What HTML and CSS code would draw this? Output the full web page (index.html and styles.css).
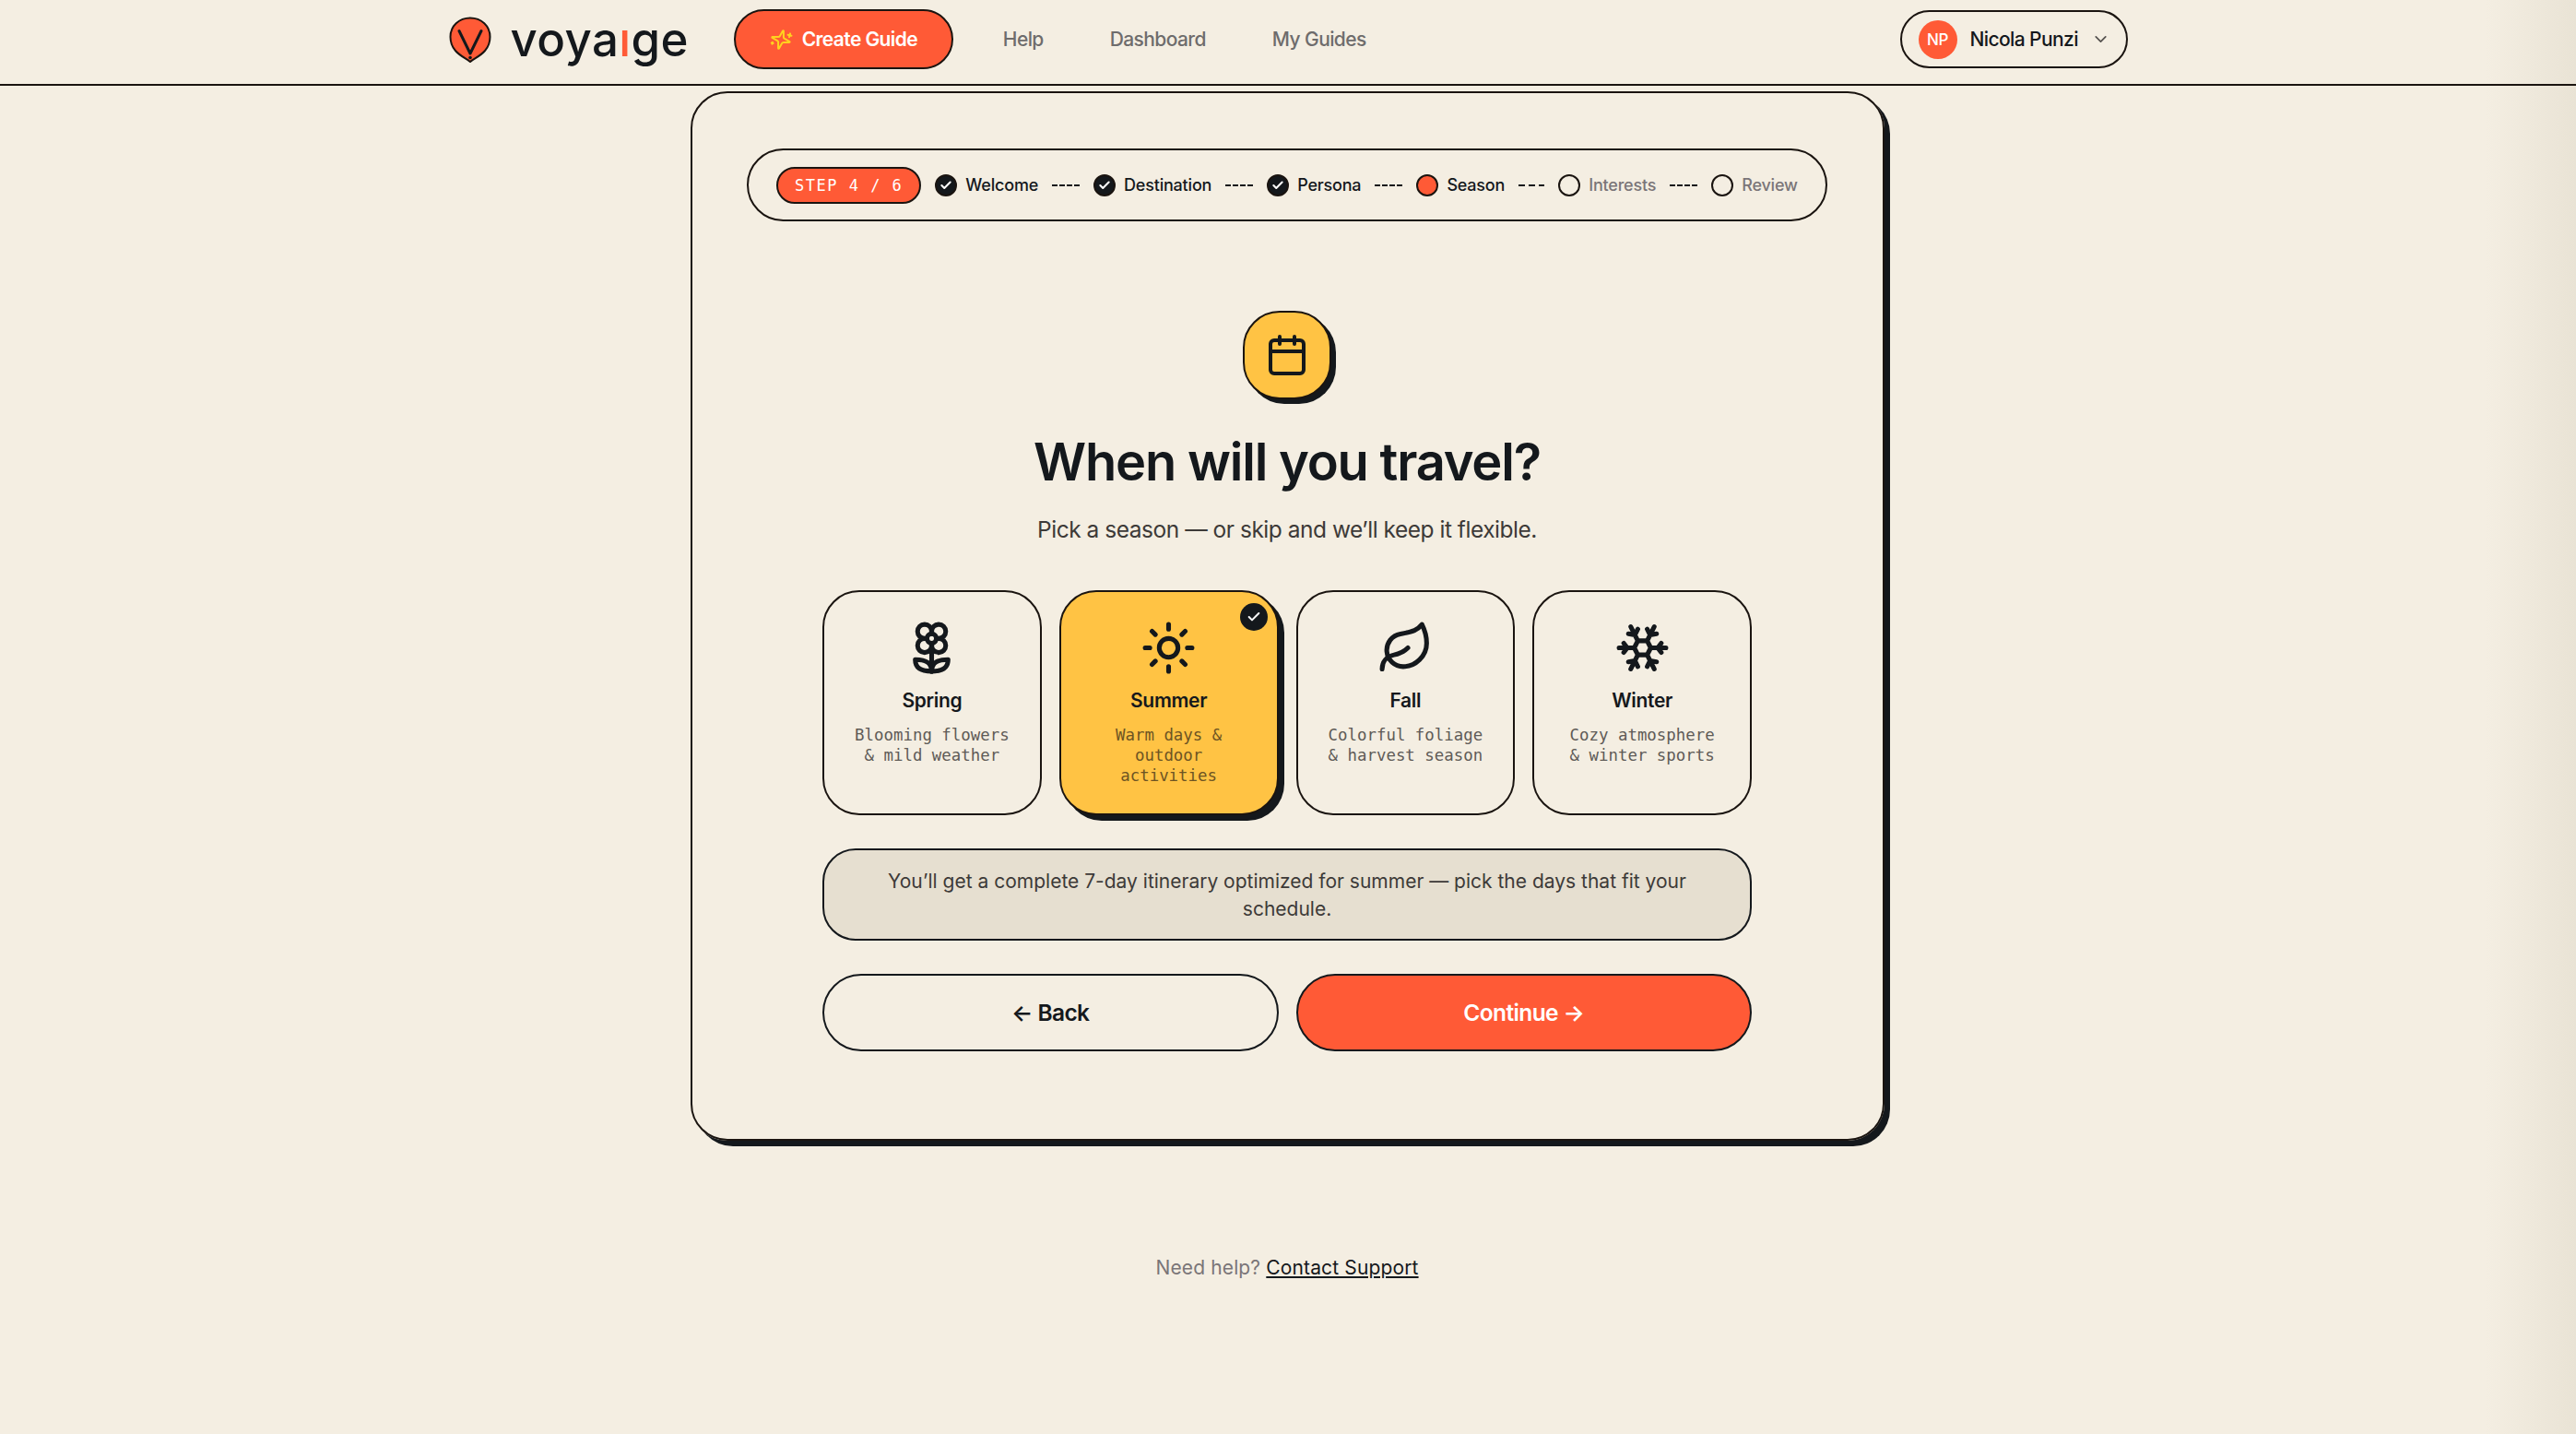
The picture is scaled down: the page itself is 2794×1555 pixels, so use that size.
FILE: index.html
```html
<!DOCTYPE html>
<html lang="en">
<head>
  <meta charset="UTF-8">
  <title>Voyaige - When will you travel?</title>
  <link rel="stylesheet" href="styles.css">
</head>
<body>
  <header class="topbar">
    <div class="topbar-inner">
      <a class="logo" href="#">
        <svg class="logo-pin" viewBox="0 0 46 50">
          <path d="M23 49C20 46 12 43 7 37C3.500 33 1.500 28 1.500 22C1.500 10 11 1.500 23 1.500S44.500 10 44.500 22C44.500 28 42.500 33 39 37C34 43 26 46 23 49Z" fill="#ff5a36" stroke="#1a1410" stroke-width="2"/>
          <path d="M11 15.500L23 40L35 15.500" fill="none" stroke="#14181c" stroke-width="3" stroke-linecap="round" stroke-linejoin="round"/>
          <circle cx="23" cy="44.500" r="1.800" fill="#14181c"/>
        </svg>
        <span class="logo-text">voya<span class="logo-i">ı</span>ge</span>
      </a>
      <a class="create-btn" href="#">
        <svg class="sparkle" viewBox="0 0 24 24">
          <path d="M9.937 15.500A2 2 0 0 0 8.500 14.063l-6.135-1.582a.5.5 0 0 1 0-.962L8.500 9.936A2 2 0 0 0 9.937 8.500l1.582-6.135a.5.5 0 0 1 .963 0L14.063 8.500A2 2 0 0 0 15.500 9.937l6.135 1.581a.5.5 0 0 1 0 .964L15.500 14.063a2 2 0 0 0-1.437 1.437l-1.582 6.135a.5.5 0 0 1-.963 0z"/>
          <path d="M20 3v4M22 5h-4M4 17v2M5 18H3"/>
        </svg>
        Create Guide
      </a>
      <nav class="nav">
        <a href="#">Help</a>
        <a href="#">Dashboard</a>
        <a href="#">My Guides</a>
      </nav>
      <div class="user-pill">
        <span class="avatar">NP</span>
        <span class="user-name">Nicola Punzi</span>
        <svg class="chevron" viewBox="0 0 24 24"><path d="m6 9 6 6 6-6"/></svg>
      </div>
    </div>
  </header>

  <main class="page">
    <section class="card">
      <div class="stepper">
        <span class="step-badge">STEP 4 / 6</span>
        <div class="step"><span class="dot done"><svg viewBox="0 0 24 24"><path d="M20 6 9 17l-5-5"/></svg></span>Welcome</div>
        <span class="dash"></span>
        <div class="step"><span class="dot done"><svg viewBox="0 0 24 24"><path d="M20 6 9 17l-5-5"/></svg></span>Destination</div>
        <span class="dash"></span>
        <div class="step"><span class="dot done"><svg viewBox="0 0 24 24"><path d="M20 6 9 17l-5-5"/></svg></span>Persona</div>
        <span class="dash"></span>
        <div class="step"><span class="dot current"></span>Season</div>
        <span class="dash wide"></span>
        <div class="step todo"><span class="dot"></span>Interests</div>
        <span class="dash"></span>
        <div class="step todo"><span class="dot"></span>Review</div>
      </div>

      <div class="hero-icon">
        <svg viewBox="0 0 24 24">
          <path d="M8 2v4M16 2v4"/>
          <rect x="3" y="4" width="18" height="18" rx="2"/>
          <path d="M3 10h18"/>
        </svg>
      </div>
      <h1>When will you travel?</h1>
      <p class="sub">Pick a season — or skip and we’ll keep it flexible.</p>

      <div class="form-col">
        <div class="seasons">
          <div class="season">
            <svg class="season-icon" viewBox="0 0 24 24">
              <path d="M12 5a3 3 0 1 1 3 3m-3-3a3 3 0 1 0-3 3m3-3v1M9 8a3 3 0 1 0 3 3M9 8h1m5 0a3 3 0 1 1-3 3m3-3h-1m-2 3v-1"/>
              <circle cx="12" cy="8" r="2"/>
              <path d="M12 10v12"/>
              <path d="M12 22c4.200 0 7-1.108 7-5-4.200 0-7 1.108-7 5Z"/>
              <path d="M12 22c-4.200 0-7-1.108-7-5 4.200 0 7 1.108 7 5Z"/>
            </svg>
            <div class="season-name">Spring</div>
            <div class="season-desc">Blooming flowers &amp; mild weather</div>
          </div>
          <div class="season selected">
            <span class="selected-check"><svg viewBox="0 0 24 24"><path d="M20 6 9 17l-5-5"/></svg></span>
            <svg class="season-icon" viewBox="0 0 24 24">
              <circle cx="12" cy="12" r="4"/>
              <path d="M12 2v2M12 20v2m-7.070-17.070 1.410 1.410m11.320 11.320 1.410 1.410M2 12h2m16 0h2M6.340 17.660l-1.410 1.410M19.070 4.930l-1.410 1.410"/>
            </svg>
            <div class="season-name">Summer</div>
            <div class="season-desc">Warm days &amp; outdoor activities</div>
          </div>
          <div class="season">
            <svg class="season-icon" viewBox="0 0 24 24">
              <path d="M11 20A7 7 0 0 1 9.800 6.100C15.500 5 17 4.480 19 2c1 2 2 4.180 2 8 0 5.500-4.780 10-10 10Z"/>
              <path d="M2 21c0-3 1.850-5.360 5.080-6C9.500 14.520 12 13 13 12"/>
            </svg>
            <div class="season-name">Fall</div>
            <div class="season-desc">Colorful foliage &amp; harvest season</div>
          </div>
          <div class="season">
            <svg class="season-icon" viewBox="0 0 24 24">
              <path d="m10 20-1.250-2.500L6 18M10 4 8.750 6.500 6 6m8 14 1.250-2.500L18 18M14 4l1.250 2.500L18 6m-1 15-3-6h-4m7-12-3 6 1.500 3M2 12h6.500L10 9m10 1-1.500 2 1.500 2m2-2h-6.500L14 15M4 10l1.500 2L4 14m3 7 3-6-1.500-3M7 3l3 6h4"/>
            </svg>
            <div class="season-name">Winter</div>
            <div class="season-desc">Cozy atmosphere &amp; winter sports</div>
          </div>
        </div>

        <div class="note">You’ll get a complete 7-day itinerary optimized for summer — pick the days that fit your schedule.</div>

        <div class="actions">
          <a class="btn" href="#">← Back</a>
          <a class="btn primary" href="#">Continue →</a>
        </div>
      </div>
    </section>

    <p class="help">Need help? <a href="#">Contact Support</a></p>
  </main>
</body>
</html>
```

FILE: styles.css
```css
body {
  margin: 0;
  min-height: 1555px;
  background: linear-gradient(to right, rgba(233, 227, 213, 0) 96.5%, #e9e3d5 100%), #f4eee2;
  font-family: Inter, 'Noto Sans', sans-serif;
  color: #14181c;
}
a {
  color: inherit;
  text-decoration: none;
}

/* top bar */
.topbar {
  height: 91px;
  box-sizing: content-box;
  border-bottom: 2px solid #1a1410;
}
.topbar-inner {
  width: 1821px;
  height: 85px;
  margin: 0 auto;
  display: flex;
  align-items: center;
}
.logo {
  display: flex;
  align-items: center;
  gap: 21px;
}
.logo-pin {
  width: 46px;
  height: 50px;
}
.logo-text {
  font-size: 51px;
  font-weight: 500;
  letter-spacing: 0.4px;
  line-height: 50px;
}
.logo-i {
  color: #ff5a36;
}
.create-btn {
  margin-left: 49px;
  width: 238px;
  height: 65px;
  box-sizing: border-box;
  display: flex;
  align-items: center;
  justify-content: center;
  gap: 11px;
  background: #ff5a36;
  border: 2px solid #1a1410;
  border-radius: 33px;
  color: #fff;
  font-size: 21px;
  font-weight: 600;
  letter-spacing: -0.6px;
}
.sparkle {
  width: 24px;
  height: 24px;
  transform: rotate(15deg);
  fill: none;
  stroke: #ffd21f;
  stroke-width: 2;
  stroke-linecap: round;
  stroke-linejoin: round;
}
.nav {
  display: flex;
  gap: 72px;
  margin-left: 54px;
  font-size: 21px;
  font-weight: 500;
  letter-spacing: -0.6px;
  color: #6e6c6c;
}
.user-pill {
  margin-left: auto;
  width: 247px;
  height: 63px;
  box-sizing: border-box;
  display: flex;
  align-items: center;
  padding-left: 18px;
  gap: 14px;
  border: 2px solid #1a1410;
  border-radius: 32px;
  font-size: 21px;
  font-weight: 500;
  letter-spacing: -0.6px;
}
.avatar {
  width: 42px;
  height: 42px;
  border-radius: 50%;
  background: #ff5a36;
  color: #fff;
  font-size: 17px;
  letter-spacing: -0.5px;
  display: flex;
  align-items: center;
  justify-content: center;
}
.chevron {
  width: 21px;
  height: 21px;
  fill: none;
  stroke: #55524f;
  stroke-width: 2;
  stroke-linecap: round;
  stroke-linejoin: round;
}

/* main card */
.page {
  display: flex;
  flex-direction: column;
  align-items: center;
  padding: 6px 2px 0 0;
}
.card {
  width: 1295px;
  height: 1138px;
  box-sizing: border-box;
  padding: 60px 60px 0;
  display: flex;
  flex-direction: column;
  align-items: center;
  border: 2px solid #1a1410;
  border-radius: 40px;
  box-shadow: 6px 6px 0 #14181c;
}

/* stepper */
.stepper {
  width: 1172px;
  height: 79px;
  box-sizing: border-box;
  padding-left: 30px;
  display: flex;
  align-items: center;
  gap: 15px;
  border: 2px solid #1a1410;
  border-radius: 40px;
}
.step-badge {
  height: 40px;
  box-sizing: border-box;
  padding: 0 18px;
  display: flex;
  align-items: center;
  background: #ff5a36;
  border: 2px solid #1a1410;
  border-radius: 20px;
  color: #fff;
  font-family: 'DejaVu Sans Mono', monospace;
  font-size: 17px;
  letter-spacing: 1.500px;
  white-space: pre;
}
.step {
  display: flex;
  align-items: center;
  gap: 9px;
  font-size: 18px;
  font-weight: 500;
  letter-spacing: -0.2px;
}
.step.todo {
  color: #7a7578;
}
.dot {
  width: 24px;
  height: 24px;
  box-sizing: border-box;
  border: 2px solid #1a1410;
  border-radius: 50%;
  display: flex;
  align-items: center;
  justify-content: center;
}
.dot.done {
  background: #14181c;
}
.dot.done svg {
  width: 14px;
  height: 14px;
  fill: none;
  stroke: #fff;
  stroke-width: 3.500;
  stroke-linecap: round;
  stroke-linejoin: round;
}
.dot.current {
  background: #ff5a36;
}
.dash {
  width: 30px;
  height: 2px;
  background: repeating-linear-gradient(to right, #14181c 0 6px, transparent 6px 8px);
}
.dash.wide {
  width: 28px;
  background: repeating-linear-gradient(to right, #14181c 0 7px, transparent 7px 11px);
}

/* heading */
.hero-icon {
  margin-top: 97px;
  width: 96px;
  height: 96px;
  flex: none;
  box-sizing: border-box;
  display: flex;
  align-items: center;
  justify-content: center;
  background: #ffc344;
  border: 2px solid #1a1410;
  border-radius: 40px;
  box-shadow: 5px 5px 0 #14181c;
}
.hero-icon svg {
  width: 48px;
  height: 48px;
  fill: none;
  stroke: #14181c;
  stroke-width: 2;
  stroke-linecap: round;
  stroke-linejoin: round;
}
h1 {
  margin: 33px 0 0;
  font-size: 56px;
  line-height: 70px;
  font-weight: 600;
  letter-spacing: -1.200px;
}
.sub {
  margin: 22px 0 0;
  font-size: 24.500px;
  line-height: 32px;
  color: #3d3a38;
  letter-spacing: -0.480px;
}

/* seasons */
.form-col {
  width: 1008px;
  margin-top: 50px;
}
.seasons {
  display: grid;
  grid-template-columns: repeat(4, 1fr);
  gap: 19px;
}
.season {
  position: relative;
  height: 244px;
  box-sizing: border-box;
  padding: 30px 30px 0;
  border: 2px solid #1a1410;
  border-radius: 40px;
  text-align: center;
}
.season.selected {
  background: #ffc344;
  box-shadow: 6px 6px 0 #14181c;
}
.season-icon {
  display: block;
  width: 61px;
  height: 61px;
  margin: 0 auto;
  fill: none;
  stroke: #14181c;
  stroke-width: 2;
  stroke-linecap: round;
  stroke-linejoin: round;
}
.season-name {
  margin-top: 13px;
  font-size: 21px;
  line-height: 28px;
  font-weight: 600;
  letter-spacing: -0.3px;
}
.season-desc {
  margin-top: 12px;
  font-family: 'DejaVu Sans Mono', monospace;
  font-size: 17.400px;
  line-height: 22px;
  color: #5f5b57;
}
.selected .season-desc {
  color: #6d5423;
}
.selected-check {
  position: absolute;
  top: 12px;
  right: 10px;
  width: 30px;
  height: 30px;
  border-radius: 50%;
  background: #14181c;
  display: flex;
  align-items: center;
  justify-content: center;
}
.selected-check svg {
  width: 16px;
  height: 16px;
  fill: none;
  stroke: #fff;
  stroke-width: 3;
  stroke-linecap: round;
  stroke-linejoin: round;
}

/* note and buttons */
.note {
  margin-top: 36px;
  height: 100px;
  box-sizing: border-box;
  padding: 19px 60px 0;
  background: #e6dfd0;
  border: 2px solid #14181c;
  border-radius: 36px;
  font-size: 21px;
  line-height: 30px;
  text-align: center;
  color: #3d3a38;
  letter-spacing: 0;
}
.actions {
  margin-top: 36px;
  display: flex;
  gap: 19px;
}
.btn {
  flex: 1;
  height: 84px;
  box-sizing: border-box;
  display: flex;
  align-items: center;
  justify-content: center;
  border: 2px solid #14181c;
  border-radius: 42px;
  font-size: 24.500px;
  font-weight: 600;
  letter-spacing: -0.6px;
}
.btn.primary {
  background: #ff5a36;
  color: #fff;
}

.help {
  margin: 123px 0 0;
  font-size: 21px;
  line-height: 30px;
  color: #7a7578;
  letter-spacing: 0.140px;
}
.help a {
  color: #14181c;
  text-decoration: underline;
}
```
